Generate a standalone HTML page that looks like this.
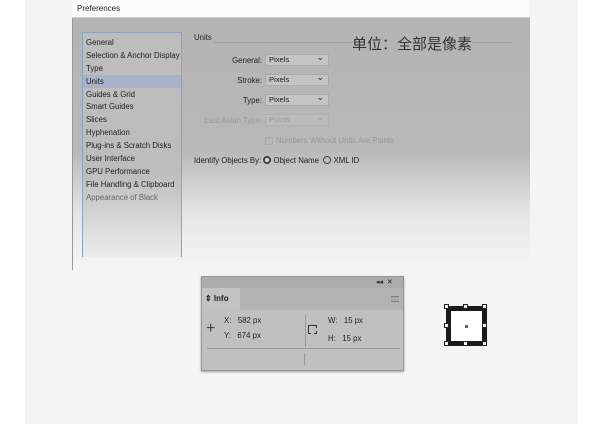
<!DOCTYPE html>
<html><head><meta charset="utf-8"><style>
*{margin:0;padding:0;box-sizing:border-box}
body{width:600px;height:440px;background:#fff;position:relative;overflow:hidden;font-family:"Liberation Sans",sans-serif;font-size:8px;color:#222}
.abs{position:absolute}
#bg{left:25px;top:0;width:553px;height:424px;background:#f4f4f4}
#dlg{left:72px;top:0;width:458px;height:270px;background:linear-gradient(#b3b3b3 0px,#b8b8b8 150px,#e6e6e6 215px,#f4f4f4 265px);border-left:1px solid #999}
#title{left:72px;top:0;width:458px;height:18px;background:#fbfbfb;border-bottom:1px solid #ccc;padding:4px 0 0 5px;font-size:8px}
#list{left:82px;top:32px;width:100px;height:225px;border:1px solid #8fa2bf;border-bottom:none;background:linear-gradient(#bdbdbd 140px,#ececec 225px)}
#list div{height:12.9px;padding-left:3px;font-size:7.8px;line-height:13px}
.sel{background:#a6b3c8}
.lbl{font-size:7.8px;text-align:right;width:70px}
.dd{width:64px;height:12px;background:#c4c4c4;border:1px solid #aaa;font-size:7.6px;padding-left:3px;line-height:10px}
.dd:after{content:"⌄";position:absolute;right:4px;top:-3px;font-size:9px}
#info{left:201px;top:276px;width:203px;height:95px;background:#c0c0c0;border:1px solid #999;box-shadow:0 1px 2px #999}
.h{position:absolute;width:5px;height:5px;background:#eee;border:1px solid #222}
</style></head><body>
<div class="abs" id="bg"></div>
<div class="abs" id="dlg"></div>
<div class="abs" id="title">Preferences</div>
<div class="abs" id="list">
<div style="margin-top:3px">General</div><div>Selection &amp; Anchor Display</div><div>Type</div><div class="sel">Units</div><div>Guides &amp; Grid</div><div>Smart Guides</div><div>Slices</div><div>Hyphenation</div><div>Plug-ins &amp; Scratch Disks</div><div>User Interface</div><div>GPU Performance</div><div>File Handling &amp; Clipboard</div><div style="color:#666">Appearance of Black</div>
</div>
<div class="abs" style="left:194px;top:33px;font-size:7.8px">Units</div>
<div class="abs" style="left:214px;top:42px;width:298px;height:1px;background:#a0a0a0"></div>
<div class="abs" style="left:352px;top:33px;font-size:15px;font-family:'Liberation Sans','Noto Sans CJK SC',sans-serif;color:#333;background:#b4b4b4">单位：全部是像素</div>
<div class="abs lbl" style="left:192px;top:56px">General:</div><div class="abs dd" style="left:265px;top:54px">Pixels</div>
<div class="abs lbl" style="left:192px;top:76px">Stroke:</div><div class="abs dd" style="left:265px;top:74px">Pixels</div>
<div class="abs lbl" style="left:192px;top:96px">Type:</div><div class="abs dd" style="left:265px;top:94px">Pixels</div>
<div class="abs lbl" style="left:192px;top:116px;color:#999">East Asian Type:</div><div class="abs dd" style="left:265px;top:114px;color:#999;background:#bcbcbc;border-color:#b0b0b0">Points</div>
<div class="abs" style="left:265px;top:137px;width:8px;height:8px;border:1px solid #aaa"></div>
<div class="abs" style="left:276px;top:136px;font-size:7.8px;color:#999">Numbers Without Units Are Points</div>
<div class="abs" style="left:194px;top:156px;font-size:7.8px">Identify Objects By: <span style="display:inline-block;width:8px;height:8px;border-radius:50%;border:2px solid #444;background:#ddd;vertical-align:-1px"></span> Object Name &nbsp;<span style="display:inline-block;width:8px;height:8px;border-radius:50%;border:1px solid #444;vertical-align:-1px"></span> XML ID</div>
<div class="abs" id="info">
<div class="abs" style="left:0;top:0;width:201px;height:11px;background:#ababab"></div>
<div class="abs" style="left:174px;top:1px;font-size:7px">◂◂ &nbsp;✕</div>
<div class="abs" style="left:0;top:11px;width:201px;height:22px;background:#b3b3b3"></div>
<div class="abs" style="left:0;top:11px;width:38px;height:22px;background:#c2c2c2;padding:6px 0 0 3px;font-weight:bold;font-size:8px">⇕ Info</div>
<div class="abs" style="left:189px;top:19px;width:8px;height:6px;border-top:1px solid #777;border-bottom:1px solid #777;background:#aaa"></div>
<div class="abs" style="left:4px;top:43px;font-size:16px;font-weight:100;color:#444">+</div>
<div class="abs" style="left:22px;top:39px;font-size:7.8px">X:&nbsp;&nbsp; 582 px</div>
<div class="abs" style="left:22px;top:54px;font-size:7.8px">Y:&nbsp;&nbsp; 674 px</div>
<div class="abs" style="left:103px;top:38px;width:1px;height:32px;background:#999"></div>
<div class="abs" style="left:106px;top:48px;width:9px;height:9px;border:1px solid #333;border-right-style:dashed;border-bottom-style:dashed"></div>
<div class="abs" style="left:126px;top:39px;font-size:7.8px">W:&nbsp;&nbsp; 15 px</div>
<div class="abs" style="left:126px;top:57px;font-size:7.8px">H:&nbsp;&nbsp; 15 px</div>
<div class="abs" style="left:5px;top:71px;width:193px;height:1px;background:#999"></div>
<div class="abs" style="left:102px;top:76px;width:1px;height:12px;background:#999"></div>
</div>
<div class="abs" style="left:446px;top:306px;width:41px;height:40px;border:5px solid #1a1a1a;background:#fff"></div>
<div class="abs" style="left:465px;top:325px;width:3px;height:3px;background:#666"></div>
<div class="h" style="left:444px;top:304px"></div>
<div class="h" style="left:463px;top:304px"></div>
<div class="h" style="left:482px;top:304px"></div>
<div class="h" style="left:444px;top:323px"></div>
<div class="h" style="left:482px;top:323px"></div>
<div class="h" style="left:444px;top:341px"></div>
<div class="h" style="left:463px;top:341px"></div>
<div class="h" style="left:482px;top:341px"></div>
</body></html>
